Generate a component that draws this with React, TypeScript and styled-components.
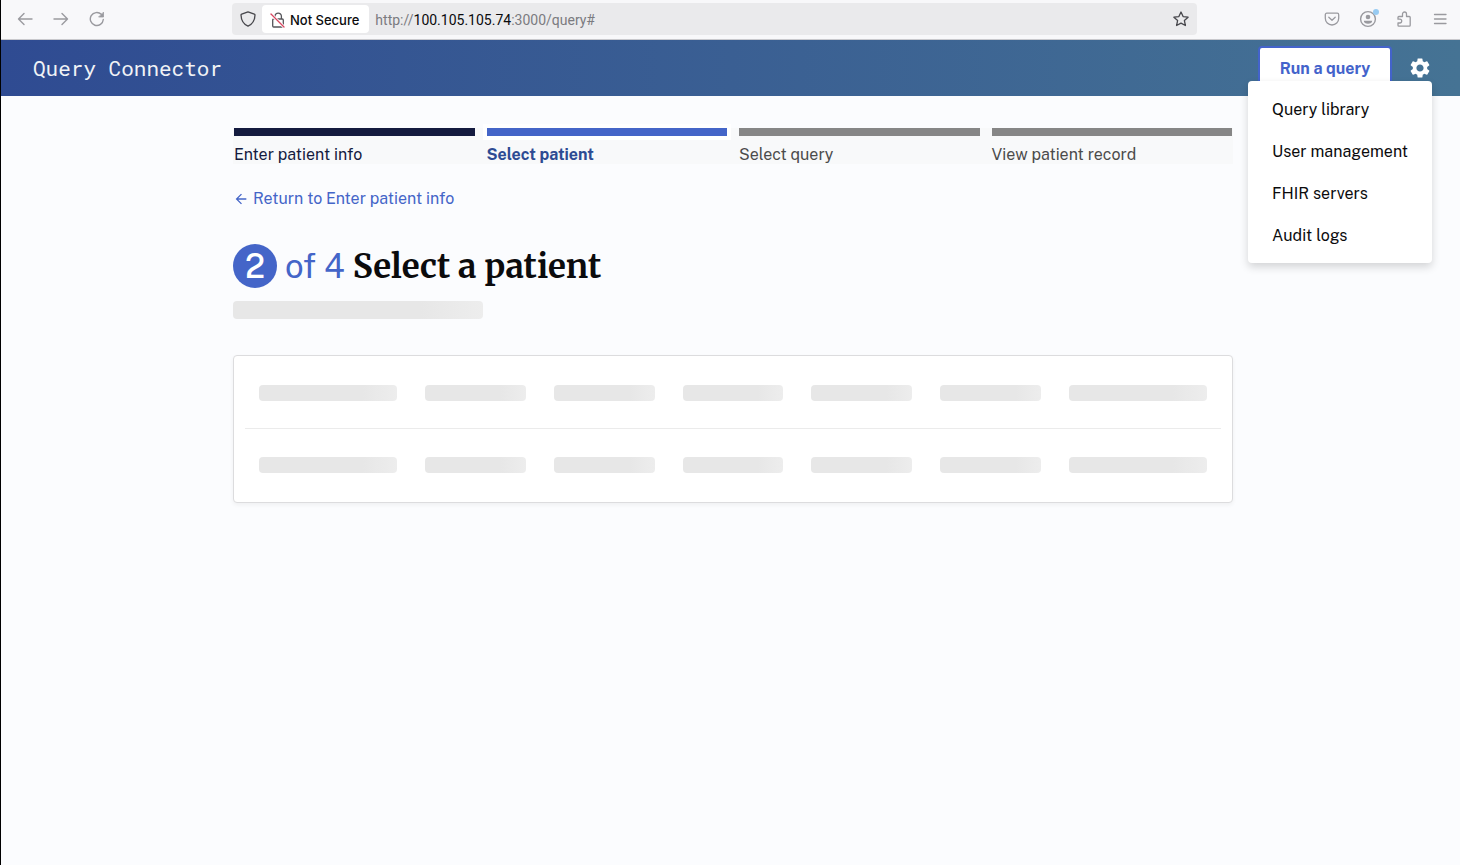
import React from "react";
import styled, { createGlobalStyle } from "styled-components";
import { MdSettings, MdArrowBack } from "react-icons/md";

const sans = `"Public Sans", Roboto, sans-serif`;

const GlobalStyle = createGlobalStyle`
  *, *::before, *::after { box-sizing: border-box; }
  html { background: #fbfcfe; }
  body { margin: 0; font-family: ${sans}; font-size: 16px; color: #0b0b0d; }
  button { font: inherit; padding: 0; border: 0; background: none; cursor: pointer; }
`;

const Window = styled.div`
  min-height: 100vh;
  border-left: 1px solid #000;
  background: #fbfcfe;
`;

const Toolbar = styled.div`
  display: flex;
  align-items: center;
  height: 40px;
  padding: 0 8px 1px 12px;
  background: #f8f8fa;
  border-bottom: 1px solid #c9c9cd;
`;

const ToolGroup = styled.div`
  display: flex;
  gap: 12px;
`;

const ToolButton = styled.button`
  display: grid;
  place-items: center;
  width: 24px;
  height: 24px;
  color: #9a9a9f;
`;

const AddressBar = styled.div`
  flex: 1;
  display: flex;
  align-items: center;
  height: 32px;
  margin: 0 123px;
  padding: 0 4px;
  border-radius: 4px;
  background: #eaeaec;
`;

const BarButton = styled.button`
  display: grid;
  place-items: center;
  width: 24px;
  height: 24px;
  color: #47474c;
`;

const SecurityChip = styled.button`
  display: flex;
  align-items: center;
  gap: 4px;
  height: 28px;
  margin: 0 6px 0 2px;
  padding: 1px 10px 0 8px;
  border-radius: 4px;
  background: #fff;
  color: #0b0b0d;
  font-family: Inter, sans-serif;
  font-size: 13px;
  font-weight: 500;
  line-height: 18px;
  white-space: nowrap;
`;

const Address = styled.div`
  flex: 1;
  padding-top: 1px;
  color: #7b7b80;
  font-family: Roboto, sans-serif;
  font-size: 14px;
  b { font-weight: 400; color: #0b0b0d; }
`;

const Header = styled.header`
  display: flex;
  align-items: center;
  justify-content: space-between;
  height: 56px;
  padding: 0 28px 0 32px;
  background: linear-gradient(90deg, #2f4b92, #457394);
`;

const Brand = styled.a`
  color: #f1f3f6;
  font-family: "Roboto Mono", "DejaVu Sans Mono", monospace;
  font-size: 21px;
  text-decoration: none;
`;

const HeaderNav = styled.nav`
  position: relative;
  display: flex;
  align-items: center;
  gap: 16px;
`;

const RunButton = styled.button`
  height: 44px;
  width: 134px;
  border: 2px solid #4363cb;
  border-radius: 4px;
  background: #fff;
  color: #4363cb;
  font-weight: 700;
`;

const GearButton = styled.button`
  display: grid;
  place-items: center;
  width: 24px;
  height: 24px;
  color: #fff;
`;

const Menu = styled.ul`
  position: absolute;
  top: 35px;
  right: 0;
  width: 184px;
  margin: 0;
  padding: 8px 0 6px;
  list-style: none;
  border-radius: 4px;
  background: #fff;
  box-shadow: 0 4px 8px rgba(0, 0, 0, 0.16);
`;

const MenuLink = styled.a`
  display: block;
  padding: 0 24px;
  line-height: 42px;
  color: #0b0b0d;
  text-decoration: none;
  white-space: nowrap;
`;

const Main = styled.main`
  padding: 32px 0 32px 5px;
`;

const Content = styled.div`
  max-width: 1000px;
  margin: 0 auto;
`;

const Steps = styled.ol`
  display: grid;
  grid-template-columns: repeat(4, 1fr);
  gap: 12px;
  margin: 0;
  padding: 0 1px;
  list-style: none;
  background: #f8f9fa;
`;

type StepState = "done" | "current" | "todo";
const barColor = { done: "#141b3f", current: "#4465c8", todo: "#868686" };
const labelColor = { done: "#141b3f", current: "#2d4b93", todo: "#4b4b4b" };

const Step = styled.li<{ $state: StepState }>`
  color: ${(p) => labelColor[p.$state]};
  font-weight: ${(p) => (p.$state === "current" ? 700 : 400)};
  line-height: 18px;
  &::before {
    content: "";
    display: block;
    height: 8px;
    margin-bottom: 10px;
    background: ${(p) => barColor[p.$state]};
    box-shadow: ${(p) => (p.$state === "current" ? "0 0 0 4px #fff" : "none")};
  }
`;

const BackLink = styled.a`
  display: inline-flex;
  align-items: center;
  gap: 4px;
  margin-top: 23px;
  line-height: 24px;
  color: #4465c8;
  text-decoration: none;
`;

const Title = styled.h1`
  display: flex;
  align-items: center;
  gap: 8px;
  height: 44px;
  margin: 33px 0 13px;
  font-size: 33px;
  font-weight: 400;
  color: #4465c8;
`;

const StepNumber = styled.span`
  display: grid;
  place-items: center;
  width: 44px;
  height: 44px;
  border-radius: 50%;
  background: #4465c8;
  color: #fff;
  font-weight: 500;
`;

const TitleText = styled.span`
  font-family: Merriweather, "DejaVu Serif Condensed", serif;
  font-weight: 700;
  color: #0b0b0d;
`;

const Skeleton = styled.div<{ $tall?: boolean }>`
  height: ${(p) => (p.$tall ? 18 : 16)}px;
  max-width: ${(p) => (p.$tall ? "250px" : "none")};
  border-radius: 4px;
  background: linear-gradient(90deg, #e7e7e7 75%, #ededed);
`;

const Card = styled.div`
  margin-top: 36px;
  padding: 0 11px 1px;
  border: 1px solid #dcdcde;
  border-radius: 4px;
  background: #fff;
  box-shadow: 0 2px 4px rgba(0, 0, 0, 0.05);
`;

const Table = styled.table`
  width: 100%;
  table-layout: fixed;
  border-spacing: 0;
`;

const Column = styled.col<{ $wide: boolean }>`
  width: ${(p) => (p.$wide ? "17%" : "auto")};
`;

const Cell = styled.td`
  padding: 28px 14px;
  tr:first-child > & {
    padding: 29px 14px 27px;
    border-bottom: 1px solid #ebebeb;
  }
`;

const Line = styled.svg`
  fill: none;
  stroke: currentColor;
  stroke-linecap: round;
  stroke-linejoin: round;
`;

const columns = [0, 1, 2, 3, 4, 5, 6];
const steps: { label: string; state: StepState }[] = [
  { label: "Enter patient info", state: "done" },
  { label: "Select patient", state: "current" },
  { label: "Select query", state: "todo" },
  { label: "View patient record", state: "todo" },
];
const menuItems = ["Query library", "User management", "FHIR servers", "Audit logs"];

function BrowserToolbar() {
  return (
    <Toolbar>
      <ToolGroup>
        <ToolButton aria-label="Back">
          <Line width="16" height="16" strokeWidth="1.4"><path d="M15 8H1.5M7 2.5 1.5 8 7 13.5" /></Line>
        </ToolButton>
        <ToolButton aria-label="Forward">
          <Line width="16" height="16" strokeWidth="1.4"><path d="M1 8h13.5M9 2.5 14.5 8 9 13.5" /></Line>
        </ToolButton>
        <ToolButton aria-label="Reload">
          <Line width="16" height="16" strokeWidth="1.4">
            <path d="M14.3 8.5a6.5 6.5 0 1 1-2-5.2" />
            <path d="M14.5 1.5v4.5H10z" fill="currentColor" strokeWidth="0.8" />
          </Line>
        </ToolButton>
      </ToolGroup>
      <AddressBar>
        <BarButton aria-label="Tracking protection">
          <Line width="16" height="16" strokeWidth="1.3">
            <path d="M8 .9 14.3 3.2c.5.2.7.5.7.9C14.8 9.5 12 13.5 8 15.2 4 13.5 1.2 9.5 1 4.1c0-.4.2-.7.7-.9z" />
          </Line>
        </BarButton>
        <SecurityChip>
          <Line width="16" height="16" strokeWidth="1.3">
            <path d="M5 7V4.3a3.2 3.2 0 0 1 6.4 0V7M6 7h6.3c.6 0 1 .4 1 1v6c0 .6-.4 1-1 1H3.7c-.6 0-1-.4-1-1V8c0-.4.2-.7.6-.9" stroke="#55555a" />
            <path d="M1 2 14 15" stroke="#fff" strokeWidth="3" />
            <path d="M1 2 14 15" stroke="#d9455f" />
          </Line>
          Not Secure
        </SecurityChip>
        <Address>http://<b>100.105.105.74</b>:3000/query#</Address>
        <BarButton aria-label="Bookmark">
          <Line width="16" height="16" strokeWidth="1.3">
            <path d="M8 1l2.1 4.6 5 .6-3.7 3.4 1 4.9L8 12.1l-4.4 2.4 1-4.9L.9 6.2l5-.6z" />
          </Line>
        </BarButton>
      </AddressBar>
      <ToolGroup>
        <ToolButton aria-label="Pocket">
          <Line width="16" height="16" strokeWidth="1.3">
            <path d="M2.8 2.2h10.4c.9 0 1.5.6 1.5 1.5v3.6a6.7 6.7 0 0 1-13.4 0V3.7c0-.9.6-1.5 1.5-1.5zM4.8 6.3 8 9.3l3.2-3" />
          </Line>
        </ToolButton>
        <ToolButton aria-label="Account">
          <Line width="22" height="22" strokeWidth="1.4">
            <circle cx="11" cy="11" r="7.4" />
            <circle cx="11" cy="9" r="2.3" fill="currentColor" stroke="none" />
            <path d="M6.8 12.7h8.4c0 1.8-1.7 3-4.2 3s-4.2-1.2-4.2-3z" fill="currentColor" stroke="none" />
            <circle cx="19" cy="4" r="3" fill="#98cbf2" stroke="none" />
          </Line>
        </ToolButton>
        <ToolButton aria-label="Extensions">
          <Line width="16" height="18" strokeWidth="1.3">
            <path d="M2 9V7.4c0-.5.4-.9.9-.9h3.6V4a2 2 0 0 1 4 0v2.500h2.800c.5 0 .9.4.9.9v7.900c0 .5-.4.9-.9.900H2.900c-.5 0-.9-.4-.9-.9V13h1.800a1.900 1.900 0 0 0 0-3.800H2z" />
          </Line>
        </ToolButton>
        <ToolButton aria-label="Menu">
          <Line width="16" height="16" strokeWidth="1.3"><path d="M2.5 3.5h11.5M2.5 8h11.5M2.5 12.5h11.5" /></Line>
        </ToolButton>
      </ToolGroup>
    </Toolbar>
  );
}

export default function App() {
  return (
    <Window>
      <GlobalStyle />
      <BrowserToolbar />
      <Header>
        <Brand href="#">Query Connector</Brand>
        <HeaderNav>
          <RunButton>Run a query</RunButton>
          <GearButton aria-label="Settings" aria-expanded="true"><MdSettings size={24} /></GearButton>
          <Menu>
            {menuItems.map((item) => (
              <li key={item}><MenuLink href="#">{item}</MenuLink></li>
            ))}
          </Menu>
        </HeaderNav>
      </Header>
      <Main>
        <Content>
          <Steps>
            {steps.map((step) => (
              <Step key={step.label} $state={step.state}>{step.label}</Step>
            ))}
          </Steps>
          <BackLink href="#"><MdArrowBack size={16} />Return to Enter patient info</BackLink>
          <Title>
            <StepNumber>2</StepNumber>
            <span>of 4</span>
            <TitleText>Select a patient</TitleText>
          </Title>
          <Skeleton $tall />
          <Card>
            <Table aria-label="Loading patients" aria-busy="true">
              <colgroup>
                {columns.map((c) => <Column key={c} $wide={c === 0 || c === 6} />)}
              </colgroup>
              <tbody>
                {[0, 1].map((row) => (
                  <tr key={row}>
                    {columns.map((c) => <Cell key={c}><Skeleton /></Cell>)}
                  </tr>
                ))}
              </tbody>
            </Table>
          </Card>
        </Content>
      </Main>
    </Window>
  );
}
